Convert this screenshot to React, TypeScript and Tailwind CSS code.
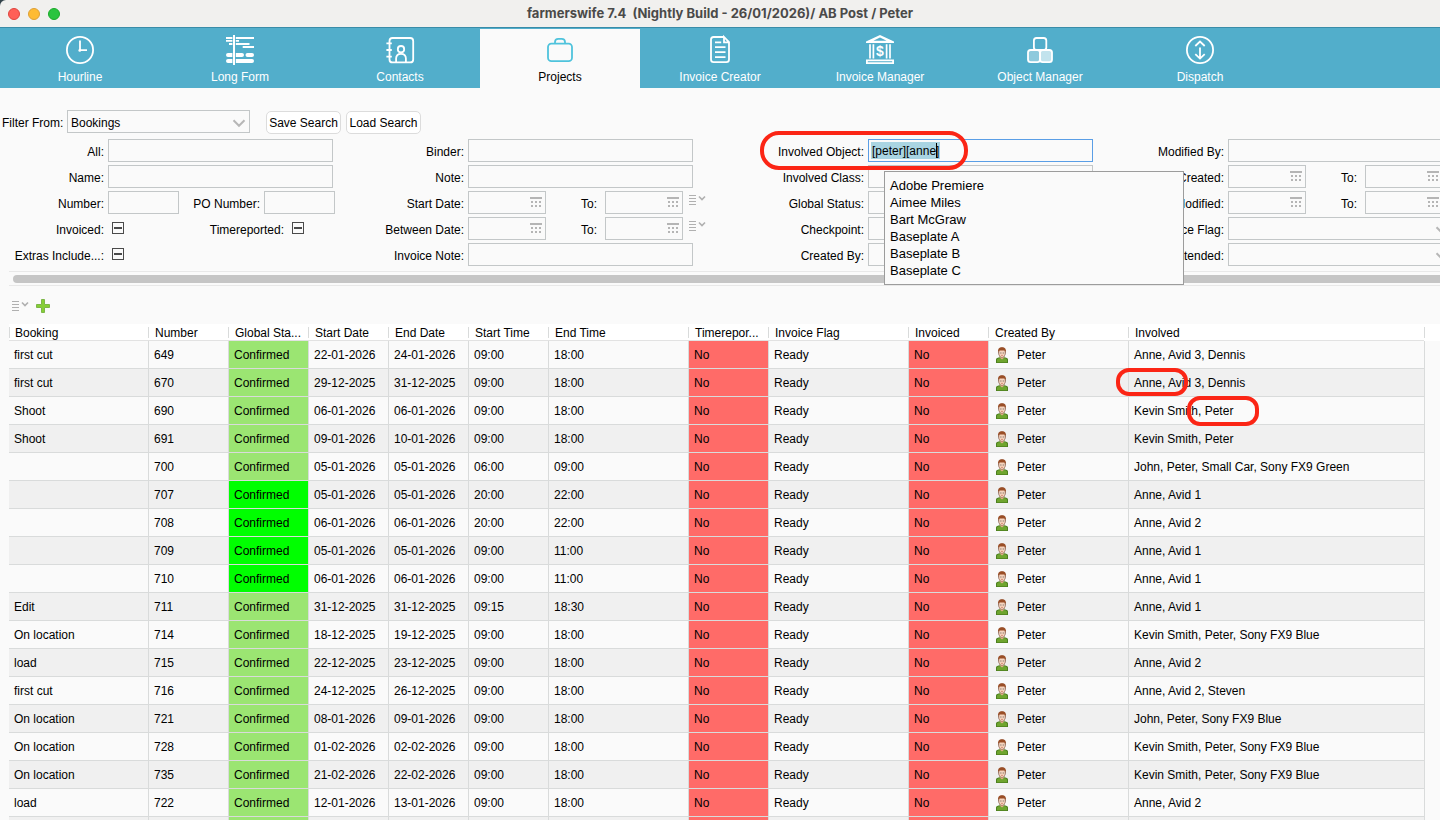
import React from "react";

const tabs = [
  { name: "Hourline", icon: <ClockIcon /> },
  { name: "Long Form", icon: <LongFormIcon /> },
  { name: "Contacts", icon: <ContactsIcon /> },
  { name: "Projects", icon: <ProjectsIcon />, active: true },
  { name: "Invoice Creator", icon: <InvoiceIcon /> },
  { name: "Invoice Manager", icon: <BankIcon /> },
  { name: "Object Manager", icon: <ObjectsIcon /> },
  { name: "Dispatch", icon: <DispatchIcon /> },
];

const suggestions = [
  "Adobe Premiere",
  "Aimee Miles",
  "Bart McGraw",
  "Baseplate A",
  "Baseplate B",
  "Baseplate C",
];

const columns = [
  { title: "Booking", width: "w-[139px]" },
  { title: "Number", width: "w-[80px]" },
  { title: "Global Sta...", width: "w-[80px]" },
  { title: "Start Date", width: "w-[80px]" },
  { title: "End Date", width: "w-[80px]" },
  { title: "Start Time", width: "w-[80px]" },
  { title: "End Time", width: "w-[140px]" },
  { title: "Timerepor...", width: "w-[80px]" },
  { title: "Invoice Flag", width: "w-[140px]" },
  { title: "Invoiced", width: "w-[80px]" },
  { title: "Created By", width: "w-[140px]" },
  { title: "Involved", width: "" },
];

interface Booking {
  name: string;
  number: string;
  start: string;
  end: string;
  from: string;
  to: string;
  involved: string;
  bright?: boolean;
  mark?: "first" | "second";
}

const bookings: Booking[] = [
  { name: "first cut", number: "649", start: "22-01-2026", end: "24-01-2026", from: "09:00", to: "18:00", involved: "Anne, Avid 3, Dennis" },
  { name: "first cut", number: "670", start: "29-12-2025", end: "31-12-2025", from: "09:00", to: "18:00", involved: "Anne, Avid 3, Dennis", mark: "first" },
  { name: "Shoot", number: "690", start: "06-01-2026", end: "06-01-2026", from: "09:00", to: "18:00", involved: "Kevin Smith, Peter", mark: "second" },
  { name: "Shoot", number: "691", start: "09-01-2026", end: "10-01-2026", from: "09:00", to: "18:00", involved: "Kevin Smith, Peter" },
  { name: "", number: "700", start: "05-01-2026", end: "05-01-2026", from: "06:00", to: "09:00", involved: "John, Peter, Small Car, Sony FX9 Green" },
  { name: "", number: "707", start: "05-01-2026", end: "05-01-2026", from: "20:00", to: "22:00", involved: "Anne, Avid 1", bright: true },
  { name: "", number: "708", start: "06-01-2026", end: "06-01-2026", from: "20:00", to: "22:00", involved: "Anne, Avid 2", bright: true },
  { name: "", number: "709", start: "05-01-2026", end: "05-01-2026", from: "09:00", to: "11:00", involved: "Anne, Avid 1", bright: true },
  { name: "", number: "710", start: "06-01-2026", end: "06-01-2026", from: "09:00", to: "11:00", involved: "Anne, Avid 1", bright: true },
  { name: "Edit", number: "711", start: "31-12-2025", end: "31-12-2025", from: "09:15", to: "18:30", involved: "Anne, Avid 1" },
  { name: "On location", number: "714", start: "18-12-2025", end: "19-12-2025", from: "09:00", to: "18:00", involved: "Kevin Smith, Peter, Sony FX9 Blue" },
  { name: "load", number: "715", start: "22-12-2025", end: "23-12-2025", from: "09:00", to: "18:00", involved: "Anne, Avid 2" },
  { name: "first cut", number: "716", start: "24-12-2025", end: "26-12-2025", from: "09:00", to: "18:00", involved: "Anne, Avid 2, Steven" },
  { name: "On location", number: "721", start: "08-01-2026", end: "09-01-2026", from: "09:00", to: "18:00", involved: "John, Peter, Sony FX9 Blue" },
  { name: "On location", number: "728", start: "01-02-2026", end: "02-02-2026", from: "09:00", to: "18:00", involved: "Kevin Smith, Peter, Sony FX9 Blue" },
  { name: "On location", number: "735", start: "21-02-2026", end: "22-02-2026", from: "09:00", to: "18:00", involved: "Kevin Smith, Peter, Sony FX9 Blue" },
  { name: "load", number: "722", start: "12-01-2026", end: "13-01-2026", from: "09:00", to: "18:00", involved: "Anne, Avid 2" },
];

function Icon({ children }: { children: React.ReactNode }) {
  return (
    <svg width="32" height="32" viewBox="0 0 32 32" fill="none" stroke="currentColor" strokeWidth="1.8" aria-hidden="true">
      {children}
    </svg>
  );
}

function ClockIcon() {
  return (
    <Icon>
      <circle cx="16" cy="16" r="13.1" />
      <path d="M16 6.5V16.2H23" />
      <circle cx="15.8" cy="16.4" r="1.4" fill="currentColor" stroke="none" />
    </Icon>
  );
}

function LongFormIcon() {
  return (
    <Icon>
      <path d="M10 1V31" strokeWidth="2" />
      <path d="M2 4H8.4M11.8 4H30M2 6.8H8.4M11.8 6.8H15M5 10H8.4M11.8 10H25.5M18.7 13H30" />
      <g fill="currentColor" stroke="none">
        <path d="M4 19H8.4V23H4A2 2 0 0 1 4 19ZM4 25H8.4V29H4A2 2 0 0 1 4 25Z" />
        <path d="M11.8 19H18A2 2 0 0 1 18 23H11.8ZM11.8 25H28A2 2 0 0 1 28 29H11.8Z" />
        <rect x="21.5" y="19" width="8.5" height="4" rx="2" />
      </g>
    </Icon>
  );
}

function ContactsIcon() {
  return (
    <Icon>
      <rect x="5.5" y="4" width="23.7" height="24.4" rx="3" />
      <path d="M2.4 9.3H7.8M2.4 16H7.8M2.4 22.7H7.8" />
      <circle cx="17" cy="15.2" r="3.2" />
      <path d="M12.1 28V24.5C12.1 21 14.5 19.8 17 19.8S21.9 21 21.9 24.5V28" />
    </Icon>
  );
}

function ProjectsIcon() {
  return (
    <Icon>
      <g className="text-[#4fc3dc]" stroke="currentColor">
        <rect x="4" y="9.6" width="24" height="17.6" rx="3.4" />
        <path d="M11 9.4V8A3.2 3.2 0 0 1 14.2 4.9H17.8A3.2 3.2 0 0 1 21 8V9.4" />
      </g>
    </Icon>
  );
}

function InvoiceIcon() {
  return (
    <Icon>
      <path d="M20 3H9.6A2.6 2.6 0 0 0 7 5.6V25.6A2.6 2.6 0 0 0 9.6 28.2H22.4A2.6 2.6 0 0 0 25 25.6V8.2L20 3V8.4H25" />
      <path d="M11 8.4H17.2M11 13.2H21.5M11 18.2H21.5M11 23.2H21.5" />
    </Icon>
  );
}

function BankIcon() {
  return (
    <Icon>
      <path fillRule="evenodd" fill="currentColor" stroke="none" d="M16 1L30 7.6V9H2V7.6ZM16 3.4L9.4 6.8H22.6Z" />
      <path d="M6 10.2V24.4M9.4 10.2V24.4M22.6 10.2V24.4M26 10.2V24.4" strokeWidth="1.7" />
      <path d="M2.9 29.2V26.3H29.1V29.2Z" />
      <text x="16" y="22" textAnchor="middle" fontSize="14" fontWeight="700" fill="currentColor" stroke="none">
        $
      </text>
    </Icon>
  );
}

function ObjectsIcon() {
  return (
    <Icon>
      <rect x="9.9" y="4" width="12.4" height="12" rx="2.6" />
      <rect x="4" y="16" width="12" height="12.2" rx="2.6" fill="#fff" fillOpacity="0.35" />
      <rect x="16" y="16" width="12" height="12.2" rx="2.6" fill="#fff" fillOpacity="0.65" />
    </Icon>
  );
}

function DispatchIcon() {
  return (
    <Icon>
      <circle cx="16" cy="16" r="13.1" />
      <path d="M11.3 12L16 7.6L20.7 12M16 13.6V24.4M11.3 20.2L16 24.6L20.7 20.2" />
    </Icon>
  );
}

function ListMenuIcon() {
  return (
    <svg width="17" height="11" viewBox="0 0 17 11" fill="none" stroke="#b0b0b0" aria-hidden="true">
      <path d="M0 .5H7M0 3.5H7M0 6.5H7M0 9.5H7" />
      <path d="M10 1.5L13 4.5L16 1.5" strokeWidth="1.6" />
    </svg>
  );
}

function PersonIcon() {
  return (
    <svg width="12" height="16" viewBox="0 0 12 16" aria-hidden="true">
      <path d="M0 16V12.5C0 11 2 10.6 4 10.2H8C10 10.6 12 11 12 12.5V16Z" fill="#4c7f1f" />
      <path d="M1 15.2V12.8C1.4 11.7 3 11.4 4.2 11.1H7.8C9 11.4 10.6 11.7 11 12.8V15.2Z" fill="#6fa52e" />
      <path d="M4.3 8.5H7.7V11L6 12.4L4.3 11Z" fill="#e3ad8c" />
      <ellipse cx="6" cy="5.6" rx="3.8" ry="5" fill="#8a6250" />
      <ellipse cx="6" cy="6" rx="2.9" ry="4.1" fill="#f6d3bd" />
      <path d="M2 5.4C1.6 2 3 .2 6 .2S10.4 2 10 5.4L9 3.6H3Z" fill="#9a4e26" />
      <path d="M4.5 6H5.3M6.8 6H7.6" stroke="#3f3f3f" />
      <path d="M5 8.4H7" stroke="#c9745c" strokeWidth=".7" />
    </svg>
  );
}

function Label({ htmlFor, width = "w-[108px]", children }: { htmlFor: string; width?: string; children: React.ReactNode }) {
  return (
    <label htmlFor={htmlFor} className={`${width} shrink-0 pt-0.5 pr-1 text-right whitespace-nowrap`}>
      {children}
    </label>
  );
}

function Row({ children }: { children: React.ReactNode }) {
  return <div className="relative flex h-[23px] items-center">{children}</div>;
}

function TextField({ id, label }: { id: string; label: string }) {
  return (
    <Row>
      <Label htmlFor={id}>{label}</Label>
      <input id={id} type="text" className="h-[23px] w-[225px] border border-[#c3c7c8] bg-transparent px-1 outline-none" />
    </Row>
  );
}

function SelectField({ id, label }: { id: string; label: string }) {
  return (
    <Row>
      <Label htmlFor={id}>{label}</Label>
      <Select id={id} width="w-[225px]" />
    </Row>
  );
}

function Select({ id, width, value = "" }: { id: string; width: string; value?: string }) {
  return (
    <div className={`relative ${width}`}>
      <select id={id} className="block h-[23px] w-full appearance-none border border-[#c3c7c8] bg-transparent px-[3px] pt-0.5 outline-none">
        <option>{value}</option>
      </select>
      <svg className="pointer-events-none absolute top-[9px] right-1" width="14" height="9" viewBox="0 0 14 9" fill="none" aria-hidden="true">
        <path d="M1.5 1.2L7 6.8L12.5 1.2" stroke="#b7b7b7" strokeWidth="2" />
      </svg>
    </div>
  );
}

function DateInput({ id }: { id: string }) {
  return (
    <div className="relative w-[78px] shrink-0">
      <input id={id} type="text" className="block h-[23px] w-full border border-[#c3c7c8] bg-transparent pr-5 pl-1 outline-none" />
      <button type="button" aria-label="Pick a date" className="absolute top-1.5 right-1">
        <svg width="12" height="10" viewBox="0 0 12 10" fill="#b5b5b5" className="block">
          <path d="M0 0H12V2H0ZM1 4H3V6H1ZM5 4H7V6H5ZM9 4H11V6H9ZM1 8H3V10H1ZM5 8H7V10H5ZM9 8H11V10H9Z" />
        </svg>
      </button>
    </div>
  );
}

function DateRange({ id, label, menu }: { id: string; label: string; menu?: boolean }) {
  return (
    <Row>
      <Label htmlFor={`${id}-from`}>{label}</Label>
      <DateInput id={`${id}-from`} />
      <label htmlFor={`${id}-to`} className="w-[59px] shrink-0 pt-0.5 pr-2 text-right">
        To:
      </label>
      <DateInput id={`${id}-to`} />
      {menu && (
        <button type="button" aria-label={`${label} presets`} className="mb-1 ml-1.5">
          <ListMenuIcon />
        </button>
      )}
    </Row>
  );
}

function TriState({ id }: { id: string }) {
  return (
    <div className="relative mb-0.5 ml-1 size-3 shrink-0">
      <input id={id} type="checkbox" className="block size-3 appearance-none border border-[#4a4a4a]" />
      <span className="pointer-events-none absolute top-[5px] left-0.5 h-0.5 w-2 bg-[#4a4a4a]" />
    </div>
  );
}

function InvolvedObject() {
  return (
    <Row>
      <Label htmlFor="involved-object">Involved Object:</Label>
      <div className="relative w-[225px]">
        <span className="absolute top-[3px] left-[3px] h-[17px] w-[69px] bg-[#a9d4e2]" />
        <input
          id="involved-object"
          type="text"
          defaultValue="[peter][anne]"
          className="relative block h-[23px] w-full border border-[#5a9ee6] bg-transparent px-[3px] outline-none"
        />
        <span className="absolute top-1 left-[68px] h-[15px] w-px bg-black" />
      </div>
      <ul className="absolute top-8 left-[124px] z-10 w-[300px] border border-[#9c9c9c] bg-[#fafafa] p-[5px] text-[13px] leading-[17px]">
        {suggestions.map((item) => (
          <li key={item}>{item}</li>
        ))}
      </ul>
      <span className="pointer-events-none absolute -top-2 left-0 z-20 h-[39px] w-52 rounded-[19px] border-4 border-[#fb2515]" />
    </Row>
  );
}

function TitleBar() {
  return (
    <div className="bg-[#33434b]">
      <div className="relative flex h-[27px] items-center justify-center rounded-tl-md bg-[#f1f0ee]">
        <div className="absolute left-2 flex gap-2">
          <button type="button" aria-label="Close" className="size-3 rounded-full border border-[#e0443e] bg-[#ff5f57]" />
          <button type="button" aria-label="Minimize" className="size-3 rounded-full border border-[#dea035] bg-[#febb33]" />
          <button type="button" aria-label="Zoom" className="size-3 rounded-full border border-[#1aab29] bg-[#2ac440]" />
        </div>
        <h1 className="font-[Inter] text-[13px] font-bold whitespace-pre text-[#4b4a49]">
          farmerswife 7.4  (Nightly Build - 26/01/2026)/ AB Post / Peter
        </h1>
      </div>
    </div>
  );
}

function NavTabs() {
  return (
    <nav className="flex h-[61px] border-t border-[#3a8ca8] bg-[#52aecb]">
      {tabs.map((tab) => (
        <a
          key={tab.name}
          href="#"
          className={`flex w-40 flex-col items-center ${
            tab.active ? "mt-px bg-[#fafafa] pt-[5px] text-black" : "pt-1.5 text-white"
          }`}
        >
          {tab.icon}
          <span className="mt-[3px] leading-4">{tab.name}</span>
        </a>
      ))}
    </nav>
  );
}

function Filters() {
  return (
    <form className="pt-[22px]">
      <div className="flex h-[29px] items-start">
        <label htmlFor="filter-from" className="w-[67px] shrink-0 pt-1 pl-0.5 leading-[18px]">
          Filter From:
        </label>
        <Select id="filter-from" width="w-[183px]" value="Bookings" />
        <div className="mt-px ml-4 flex gap-[5px]">
          <button type="button" className="h-[23px] w-[75px] rounded-[5px] border border-[#dcdcdc] bg-white whitespace-nowrap">
            Save Search
          </button>
          <button type="button" className="h-[23px] w-[75px] rounded-[5px] border border-[#dcdcdc] bg-white whitespace-nowrap">
            Load Search
          </button>
        </div>
      </div>
      <div className="flex">
        <div className="flex w-[360px] shrink-0 flex-col gap-[3px]">
          <TextField id="all" label="All:" />
          <TextField id="name" label="Name:" />
          <Row>
            <Label htmlFor="number">Number:</Label>
            <input id="number" type="text" className="h-[23px] w-[71px] border border-[#c3c7c8] bg-transparent px-1 outline-none" />
            <Label htmlFor="po-number" width="w-[85px]">
              PO Number:
            </Label>
            <input id="po-number" type="text" className="h-[23px] w-[71px] border border-[#c3c7c8] bg-transparent px-1 outline-none" />
          </Row>
          <Row>
            <Label htmlFor="invoiced">Invoiced:</Label>
            <TriState id="invoiced" />
            <Label htmlFor="timereported" width="w-[164px]">
              Timereported:
            </Label>
            <TriState id="timereported" />
          </Row>
          <Row>
            <Label htmlFor="extras">Extras Include...:</Label>
            <TriState id="extras" />
          </Row>
        </div>
        <div className="flex w-[400px] shrink-0 flex-col gap-[3px]">
          <TextField id="binder" label="Binder:" />
          <TextField id="note" label="Note:" />
          <DateRange id="start-date" label="Start Date:" menu />
          <DateRange id="between-date" label="Between Date:" menu />
          <TextField id="invoice-note" label="Invoice Note:" />
        </div>
        <div className="relative z-10 flex w-[360px] shrink-0 flex-col gap-[3px]">
          <InvolvedObject />
          <TextField id="involved-class" label="Involved Class:" />
          <TextField id="global-status" label="Global Status:" />
          <TextField id="checkpoint" label="Checkpoint:" />
          <TextField id="created-by" label="Created By:" />
        </div>
        <div className="flex w-[360px] shrink-0 flex-col gap-[3px]">
          <TextField id="modified-by" label="Modified By:" />
          <DateRange id="created" label="Created:" />
          <DateRange id="modified" label="Modified:" />
          <SelectField id="invoice-flag" label="Invoice Flag:" />
          <SelectField id="extended" label="Extended:" />
        </div>
      </div>
      <div className="mt-[5px] ml-[9px] h-[15px] border-y border-[#e8e8e8] py-[3px] pl-1">
        <div className="h-2 rounded-l-full bg-[#c5c5c5]" />
      </div>
    </form>
  );
}

function Toolbar() {
  return (
    <div className="flex h-[38px] items-center gap-[7px] pt-0.5 pl-3">
      <button type="button" aria-label="List options">
        <ListMenuIcon />
      </button>
      <button type="button" aria-label="Add booking">
        <svg width="14" height="14" viewBox="0 0 14 14" aria-hidden="true">
          <path d="M5.5 .5H8.5V5.5H13.5V8.5H8.5V13.5H5.5V8.5H.5V5.5H5.5Z" fill="#86cf35" stroke="#7cb648" />
        </svg>
      </button>
    </div>
  );
}

const cell = "h-7 truncate border-b border-l border-[#d9dbdb] py-0 pr-0 pl-[5px]";

function BookingRow({ booking }: { booking: Booking }) {
  return (
    <tr className="odd:bg-[#fafafa] even:bg-[#f0f0f0]">
      <td className="h-7 border-b border-[#d9dbdb] py-0 pr-0 pl-[5px]">{booking.name}</td>
      <td className={cell}>{booking.number}</td>
      <td className={`${cell} ${booking.bright ? "bg-[#00ff00]" : "bg-[#9be572]"}`}>Confirmed</td>
      <td className={cell}>{booking.start}</td>
      <td className={cell}>{booking.end}</td>
      <td className={cell}>{booking.from}</td>
      <td className={cell}>{booking.to}</td>
      <td className={`${cell} bg-[#ff6b68]`}>No</td>
      <td className={cell}>Ready</td>
      <td className={`${cell} bg-[#ff6b68]`}>No</td>
      <td className={cell}>
        <span className="flex items-center gap-2 pl-0.5">
          <PersonIcon />
          <span className="pl-px">Peter</span>
        </span>
      </td>
      <td className="relative h-7 border-b border-l border-[#d9dbdb] py-0 pr-0 pl-[5px]">
        {booking.involved}
        {booking.mark === "first" && (
          <span className="pointer-events-none absolute -top-px -left-[13px] h-7 w-[72px] rounded-[13px] border-4 border-[#fb2515]" />
        )}
        {booking.mark === "second" && (
          <span className="pointer-events-none absolute -top-px left-[58px] h-[30px] w-[72px] rounded-[13px] border-4 border-[#fb2515]" />
        )}
      </td>
      <td className="border-l border-[#d9dbdb] bg-[#fafafa] p-0" />
    </tr>
  );
}

// Placeholder shown under the last loaded booking
function EmptyRow() {
  return (
    <tr className="bg-[#f0f0f0]">
      <td className="h-7" />
      <td className={cell} />
      <td className={`${cell} bg-[#9be572]`} />
      <td className={cell} />
      <td className={cell} />
      <td className={cell} />
      <td className={cell} />
      <td className={`${cell} bg-[#ff6b68]`} />
      <td className={cell} />
      <td className={`${cell} bg-[#ff6b68]`} />
      <td className={cell} />
      <td className={cell} />
      <td className="border-l border-[#d9dbdb] bg-[#fafafa] p-0" />
    </tr>
  );
}

function BookingTable() {
  return (
    <div className="pl-[9px]">
      <table className="w-full table-fixed border-separate border-spacing-0">
        <thead>
          <tr className="bg-white">
            {columns.map((column) => (
              <th key={column.title} className={`group h-[17px] border-b border-[#e2e2e2] p-0 text-left font-normal ${column.width}`}>
                <div className="mt-[3px] mb-0.5 h-[11px] border-l border-[#d9dbdb] pl-1.5 leading-[13px] whitespace-nowrap group-first:pl-[5px]">
                  {column.title}
                </div>
              </th>
            ))}
            <th className="w-4 p-0">
              <div className="h-[11px] border-l border-[#d9dbdb]" />
            </th>
          </tr>
        </thead>
        <tbody>
          {bookings.map((booking) => (
            <BookingRow key={booking.number} booking={booking} />
          ))}
          <EmptyRow />
        </tbody>
      </table>
    </div>
  );
}

const App = () => {
  return (
    <div className="h-screen overflow-hidden bg-[#fafafa] font-['Liberation_Sans',Arial,sans-serif] text-[12px] text-black">
      <TitleBar />
      <NavTabs />
      <Filters />
      <Toolbar />
      <BookingTable />
    </div>
  );
};

export default App;
